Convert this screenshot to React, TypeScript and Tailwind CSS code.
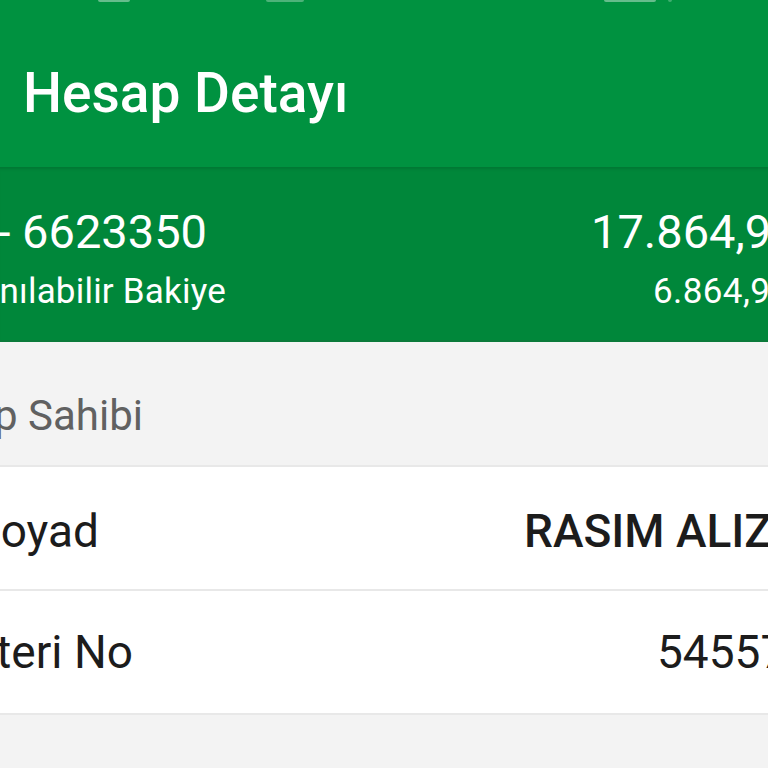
const font = { fontFamily: "Roboto, 'Noto Sans', sans-serif" };

function CutLeft({ width, className, children }: { width: string; className: string; children: React.ReactNode }) {
  // text is anchored at its right edge; whatever does not fit runs off the left side
  return <div className={`flex shrink-0 justify-end whitespace-nowrap ${width} ${className}`}>{children}</div>;
}

function CutRight({ width, className, children }: { width: string; className: string; children: React.ReactNode }) {
  return <div className={`ml-auto shrink-0 whitespace-nowrap ${width} ${className}`}>{children}</div>;
}

export default function App() {
  return (
    <div className="h-[768px] w-[768px] overflow-hidden bg-[#f3f3f3]" style={font}>
      {/* toolbar */}
      <div className="relative h-[167px] bg-[#009240]">
        <div className="flex h-[4px] items-start">
          <div className="ml-[98px] h-[2px] w-[32px] rounded-b-full bg-white/40" />
          <div className="ml-[136px] h-[2px] w-[38px] rounded-b-full bg-white/30" />
          <div className="ml-[300px] h-[2px] w-[52px] rounded-b-full bg-white/40" />
          <div className="ml-[12px] h-[2px] w-[4px] rounded-b-full bg-white/25" />
        </div>
        <div className="flex h-[163px] items-center pl-[23px] pt-[16px]">
          <h1 className="text-[55px] font-medium leading-none text-white">Hesap Detayı</h1>
        </div>
      </div>

      {/* balance band */}
      <div className="relative h-[175px] bg-[#00873a] pt-[41px] shadow-[inset_0_4px_3px_-2px_rgba(0,0,0,0.12)]">
        <div className="flex">
          <CutLeft width="w-[207px]" className="text-[47px] leading-none text-white">
            2001 - 6623350
          </CutLeft>
          <CutRight width="w-[177px]" className="text-[47px] leading-none text-white">
            17.864,92 TL
          </CutRight>
        </div>
        <div className="mt-[19px] flex">
          <CutLeft width="w-[226px]" className="text-[35px] leading-none tracking-[0.2px] text-white">
            Kullanılabilir Bakiye
          </CutLeft>
          <CutRight width="w-[115px]" className="text-[35px] leading-none tracking-[0.4px] text-white">
            6.864,92 TL
          </CutRight>
        </div>
        <div className="absolute bottom-0 left-0 h-[2px] w-full bg-[#0a7a3a]" />
      </div>

      {/* section header */}
      <div className="h-[123px] pt-[53px]">
        <div className="flex">
          <CutLeft width="w-[143px]" className="text-[42px] leading-none text-[#616161]">
            Hesap Sahibi
          </CutLeft>
        </div>
      </div>

      <div className="border-y-2 border-[#e8e8e8] bg-white">
        <div className="flex h-[122px] items-center pt-[6px]">
          <CutLeft width="w-[99px]" className="text-[46px] leading-none text-[#1c1c1c]">
            Ad Soyad
          </CutLeft>
          <CutRight width="w-[244px]" className="text-[46px] font-medium leading-none text-[#1c1c1c]">
            RASIM ALIZADE
          </CutRight>
        </div>
        <div className="flex h-[124px] items-center border-t-2 border-[#e8e8e8]">
          <CutLeft width="w-[133px]" className="text-[46px] leading-none text-[#1c1c1c]">
            Müşteri No
          </CutLeft>
          <CutRight width="w-[111px]" className="text-[46px] leading-none text-[#1c1c1c]">
            54557812
          </CutRight>
        </div>
      </div>
    </div>
  );
}
